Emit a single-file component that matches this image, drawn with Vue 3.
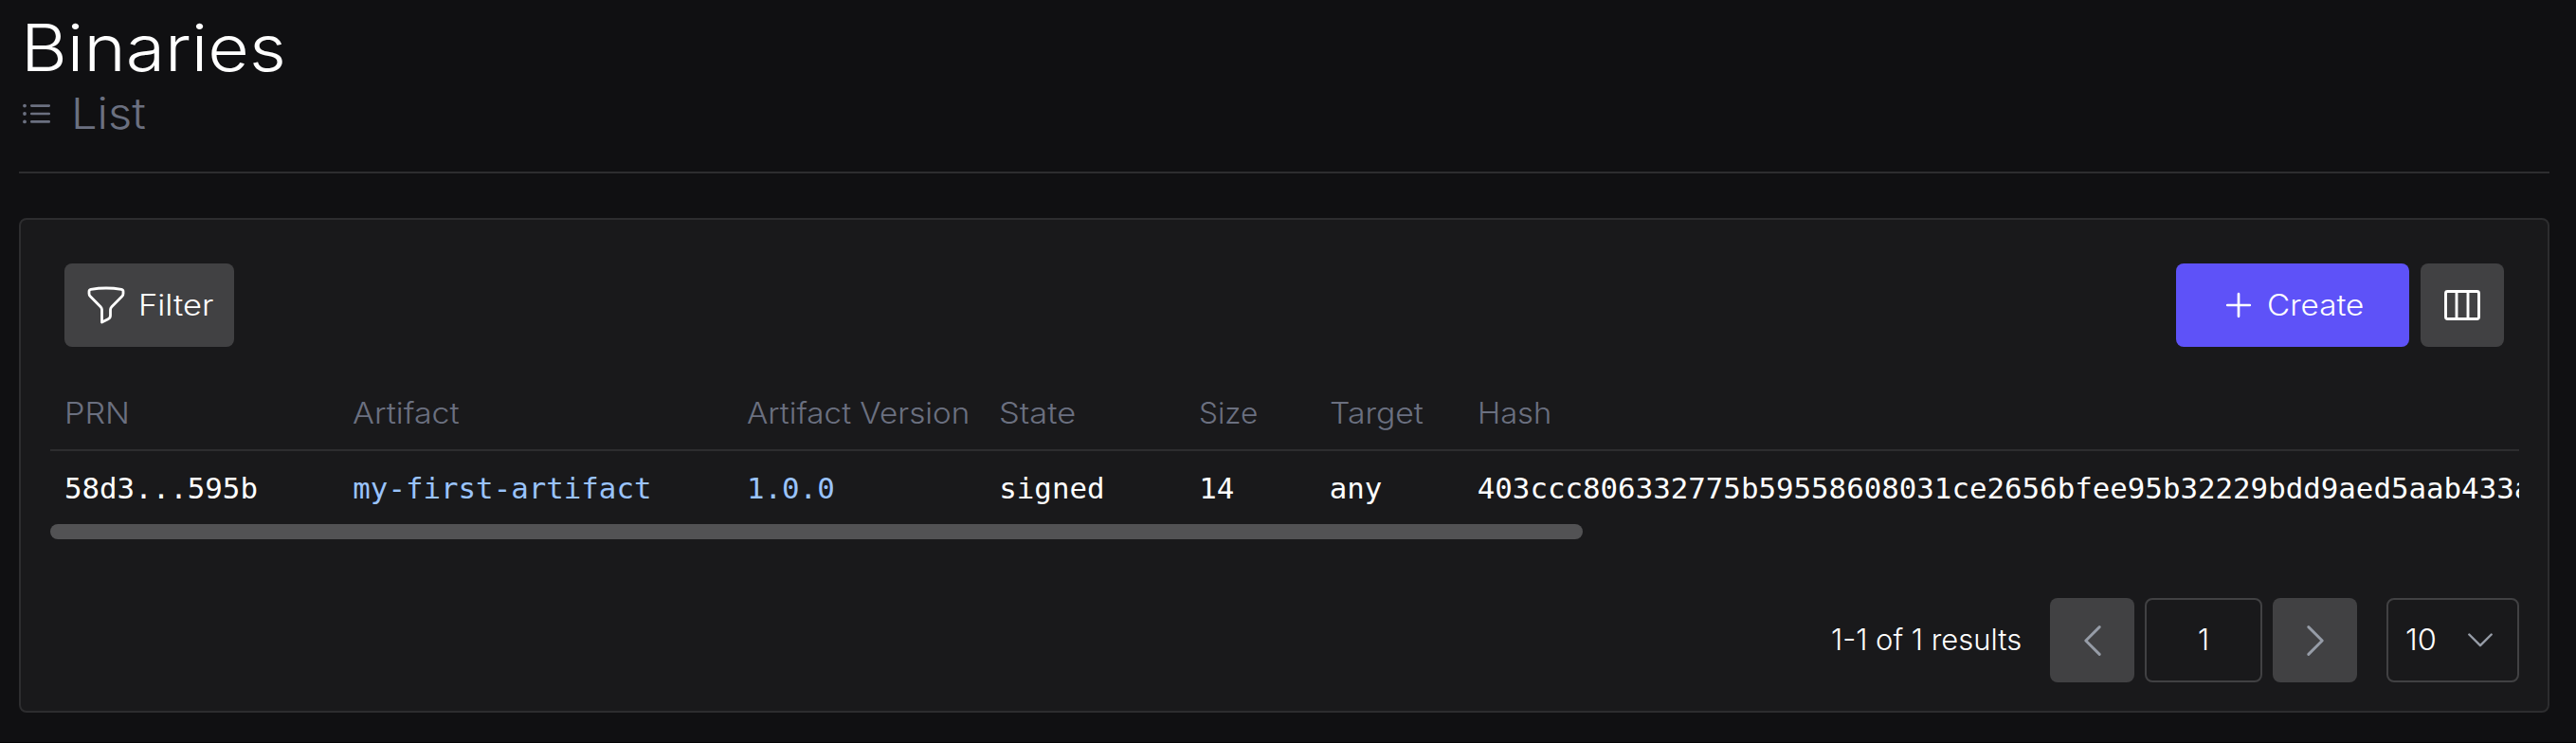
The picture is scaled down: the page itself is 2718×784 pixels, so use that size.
<script setup>
const columns = [
  { key: 'prn', label: 'PRN', stretch: 1.12 },
  { key: 'artifact', label: 'Artifact', stretch: 1.115, link: true },
  { key: 'version', label: 'Artifact Version', stretch: 1.088, link: true },
  { key: 'state', label: 'State', stretch: 1.13 },
  { key: 'size', label: 'Size', stretch: 1.035 },
  { key: 'target', label: 'Target', stretch: 1.105 },
  { key: 'hash', label: 'Hash', stretch: 1.07 },
]
const rows = [
  {
    prn: '58d3...595b',
    artifact: 'my-first-artifact',
    version: '1.0.0',
    state: 'signed',
    size: '14',
    target: 'any',
    hash: '403ccc806332775b59558608031ce2656bfee95b32229bdd9aed5aab433a',
  },
]
</script>

<template>
  <main class="page">
    <header class="head">
      <h1>Binaries</h1>
      <div class="sub">
        <svg class="list-icon" viewBox="0 0 30 22" fill="none">
          <g fill="currentColor">
            <circle cx="2" cy="2.6" r="1.9" />
            <circle cx="2" cy="11" r="1.9" />
            <circle cx="2" cy="19.4" r="1.9" />
          </g>
          <path d="M9.3 2.6h18.4M9.3 11h18.4M9.3 19.4h18.4" stroke="currentColor" stroke-width="2.7" stroke-linecap="round" />
        </svg>
        <h2>List</h2>
      </div>
    </header>

    <section class="card">
      <div class="toolbar">
        <button class="btn filter">
          <svg width="48" height="48" viewBox="0 0 24 24" fill="none" stroke="currentColor" stroke-width="1.4" stroke-linecap="round" stroke-linejoin="round">
            <path d="M12 3c2.755 0 5.455.232 8.083.678.533.09.917.556.917 1.096v1.044a2.25 2.25 0 0 1-.659 1.591l-5.432 5.432a2.25 2.25 0 0 0-.659 1.591v2.927a2.25 2.25 0 0 1-1.244 2.013L9.75 21v-6.568a2.25 2.25 0 0 0-.659-1.591L3.659 7.409A2.25 2.25 0 0 1 3 5.818V4.774c0-.54.384-1.006.917-1.096A48.32 48.32 0 0 1 12 3Z" />
          </svg>
          <span>Filter</span>
        </button>
        <div class="actions">
          <button class="btn create">
            <svg width="28" height="28" viewBox="0 0 28 28" fill="none" stroke="currentColor" stroke-width="2.7" stroke-linecap="round">
              <path d="M14 2.2v23.6M2.2 14h23.6" />
            </svg>
            <span>Create</span>
          </button>
          <button class="btn square" aria-label="Columns">
            <svg width="38" height="32" viewBox="0 0 38 32" fill="none" stroke="currentColor" stroke-width="2.9" stroke-linejoin="round">
              <rect x="1.5" y="1.5" width="35" height="29" rx="2" />
              <path d="M13 1.5v29M25 1.5v29" />
            </svg>
          </button>
        </div>
      </div>

      <div class="table">
        <div class="row thead">
          <span v-for="c in columns" :key="c.key" :style="{ transform: `scaleX(${c.stretch})` }">{{ c.label }}</span>
        </div>
        <div v-for="r in rows" :key="r.prn" class="row tbody">
          <span v-for="c in columns" :key="c.key" :class="{ link: c.link }">{{ r[c.key] }}</span>
        </div>
        <div class="thumb"></div>
      </div>

      <footer class="pager">
        <span class="results">1-1 of 1 results</span>
        <button class="btn nav" aria-label="Previous">
          <svg width="18" height="32" viewBox="0 0 18 32" fill="none" stroke="currentColor" stroke-width="2.9" stroke-linecap="round" stroke-linejoin="round">
            <path d="M16.2 1.6 1.8 16l14.4 14.4" />
          </svg>
        </button>
        <div class="field number">1</div>
        <button class="btn nav" aria-label="Next">
          <svg width="18" height="32" viewBox="0 0 18 32" fill="none" stroke="currentColor" stroke-width="2.9" stroke-linecap="round" stroke-linejoin="round">
            <path d="M1.8 1.6 16.2 16 1.8 30.4" />
          </svg>
        </button>
        <div class="field select">
          <span>10</span>
          <svg width="26" height="15" viewBox="0 0 26 15" fill="none" stroke="currentColor" stroke-width="2.4" stroke-linecap="round" stroke-linejoin="round">
            <path d="M1.3 1.5 13 13.2 24.7 1.5" />
          </svg>
        </div>
      </footer>
    </section>
  </main>
</template>

<style>
body {
  background: #101012;
}
</style>

<style scoped>
.page {
  box-sizing: border-box;
  height: 784px;
  padding: 0 28px 0 20px;
  background: #101012;
  border-bottom: 1px solid #020203;
  color: #fff;
  font: 300 30.5px/1 Inter, "Liberation Sans", sans-serif;
  overflow: hidden;
}
.head {
  box-sizing: border-box;
  height: 183px;
  padding-top: 16px;
  border-bottom: 2px solid #2d2d2f;
}
h1 {
  width: max-content;
  margin: 0 0 0 1.5px;
  font-size: 68px;
  line-height: 68px;
  font-weight: 300;
  transform: scaleX(1.106);
  transform-origin: left;
}
.sub {
  display: flex;
  align-items: center;
  gap: 20.5px;
  height: 71px;
  padding-left: 4px;
  color: #6b7080;
}
.list-icon {
  width: 30px;
  height: 22px;
}
h2 {
  margin: 0;
  font-size: 45px;
  line-height: 60px;
  font-weight: 300;
  transform: scaleX(1.085);
  transform-origin: left;
}
.card {
  box-sizing: border-box;
  height: 522px;
  margin-top: 47px;
  padding: 46px 30px 30px 31px;
  border: 2px solid #2d2d2f;
  border-radius: 8px;
  background: #19191b;
}
.toolbar {
  display: flex;
  justify-content: space-between;
  padding: 0 16px 0 15px;
}
.actions {
  display: flex;
  gap: 12px;
}
.btn {
  display: flex;
  align-items: center;
  justify-content: center;
  height: 88px;
  margin: 0;
  padding: 0;
  border: 0;
  border-radius: 8px;
  background: #414143;
  color: #fff;
  font: inherit;
}
.btn svg {
  flex: none;
}
.btn span {
  transform-origin: left;
}
.filter {
  justify-content: flex-start;
  gap: 10px;
  width: 179px;
  padding-left: 20.3px;
}
.filter span {
  transform: scaleX(1.13);
}
.create {
  justify-content: flex-start;
  gap: 15.5px;
  width: 246px;
  padding-left: 52px;
  background: #5e52f8;
}
.create span {
  transform: scaleX(1.09);
}
.square {
  width: 88px;
}
.table {
  margin-top: 32px;
  overflow: hidden;
}
.row {
  display: grid;
  grid-template-columns: 304.3px 415.7px 266.3px 211px 137.5px 156px 1fr;
  align-items: center;
  padding-left: 15px;
  white-space: nowrap;
}
.row > span {
  min-width: 0;
  transform-origin: left;
}
.thead {
  height: 76px;
  border-bottom: 2px solid #2d2d2f;
  color: #6b7080;
}
.tbody {
  height: 75px;
  padding-top: 2px;
  font: 400 30.81px/1.2 "DejaVu Sans Mono", monospace;
}
.link {
  color: #9ac3fb;
}
.thumb {
  width: 1617px;
  height: 16px;
  border-radius: 8px;
  background: #525254;
}
.pager {
  display: flex;
  align-items: center;
  justify-content: flex-end;
  gap: 11px;
  margin-top: 62px;
}
.results {
  margin-right: 19px;
  transform: scaleX(1.015);
  transform-origin: right;
}
.nav {
  width: 89px;
  height: 89px;
  color: #969ca7;
}
.field {
  box-sizing: border-box;
  display: flex;
  align-items: center;
  height: 89px;
  border: 2px solid #414143;
  border-radius: 8px;
}
.number {
  justify-content: center;
  width: 124px;
}
.select {
  justify-content: space-between;
  width: 140px;
  margin-left: 20px;
  padding: 0 26px 0 18px;
}
.select span {
  transform: scaleX(1.07);
  transform-origin: left;
}
.select svg {
  color: #969ca7;
}
</style>
